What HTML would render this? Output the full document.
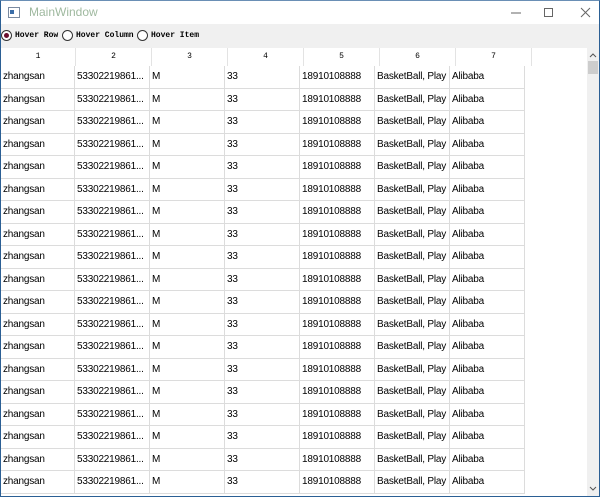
<!DOCTYPE html>
<html><head><style>
body{margin:0;width:600px;height:497px;overflow:hidden;background:#fff;font-family:"Liberation Sans",sans-serif;position:relative}
.win{position:absolute;left:0;top:0;width:598px;height:495px;border:1px solid #2b5f94;border-top:1px solid #6a8fb5;background:#fff}
.title{position:absolute;left:0;top:0;width:598px;height:23px;background:#fff}
.title .t{position:absolute;left:28px;top:4px;font-size:12px;color:#9fb99f}
.tb{position:absolute;left:0;top:23px;width:598px;height:24px;background:#f0f0f0;font-family:"Liberation Mono",monospace;font-size:8px;color:#000;font-weight:bold}
.rb{position:absolute;top:6px;width:11px;height:11px;border:1px solid #333;border-radius:50%;background:#fff;box-sizing:border-box}
.lab{position:absolute;top:7px}
.grid{position:absolute;left:0;top:47px;width:586px;height:448px;overflow:hidden}
.hdr{display:flex;height:18px;font-size:8px;font-family:"Liberation Mono",monospace}
.hdr div{width:74px;border-right:1px solid #e3e3e3;text-align:center;line-height:18px;flex:none}
.rows div.r{display:flex;height:22.5px;box-sizing:border-box}
.r span{width:74px;border-right:1px solid #dcdcdc;border-bottom:1px solid #dcdcdc;font-size:10px;line-height:21px;padding-left:2px;box-sizing:border-box;flex:none;white-space:nowrap;overflow:hidden;color:#000;letter-spacing:-0.2px}
.r span:nth-child(n+2){width:75px}
.hdr div:nth-child(n+2){width:75px}
.sb{position:absolute;left:586px;top:47px;width:12px;height:448px;background:#f0f0f0}
</style></head><body>
<div class="win">
<div class="title">
<svg style="position:absolute;left:7px;top:6px" width="12" height="11"><rect x="0.5" y="0.5" width="11" height="10" fill="#fff" stroke="#7a8aa0"/><rect x="2" y="3" width="4" height="4" fill="#3b6ea8"/></svg>
<span class="t">MainWindow</span>
<svg style="position:absolute;left:505px;top:6px" width="90" height="12"><line x1="5" y1="6" x2="15" y2="6" stroke="#666"/><rect x="38.5" y="1.5" width="8" height="8" fill="none" stroke="#666"/><path d="M75 1L84 10M84 1L75 10" stroke="#666"/></svg>
</div>
<div class="tb">
<div class="rb" style="left:0px"><div style="position:absolute;left:2px;top:2px;width:5px;height:5px;border-radius:50%;background:#6b0f2e"></div></div>
<span class="lab" style="left:14px">Hover Row</span>
<div class="rb" style="left:61px"></div><span class="lab" style="left:75px">Hover Column</span>
<div class="rb" style="left:136px"></div><span class="lab" style="left:150px">Hover Item</span>
</div>
<div class="grid">
<div class="hdr"><div>1</div><div>2</div><div>3</div><div>4</div><div>5</div><div>6</div><div>7</div></div>
<div class="rows">
<div class="r"><span>zhangsan</span><span>53302219861...</span><span>M</span><span>33</span><span>18910108888</span><span>BasketBall, Play</span><span>Alibaba</span></div>
<div class="r"><span>zhangsan</span><span>53302219861...</span><span>M</span><span>33</span><span>18910108888</span><span>BasketBall, Play</span><span>Alibaba</span></div>
<div class="r"><span>zhangsan</span><span>53302219861...</span><span>M</span><span>33</span><span>18910108888</span><span>BasketBall, Play</span><span>Alibaba</span></div>
<div class="r"><span>zhangsan</span><span>53302219861...</span><span>M</span><span>33</span><span>18910108888</span><span>BasketBall, Play</span><span>Alibaba</span></div>
<div class="r"><span>zhangsan</span><span>53302219861...</span><span>M</span><span>33</span><span>18910108888</span><span>BasketBall, Play</span><span>Alibaba</span></div>
<div class="r"><span>zhangsan</span><span>53302219861...</span><span>M</span><span>33</span><span>18910108888</span><span>BasketBall, Play</span><span>Alibaba</span></div>
<div class="r"><span>zhangsan</span><span>53302219861...</span><span>M</span><span>33</span><span>18910108888</span><span>BasketBall, Play</span><span>Alibaba</span></div>
<div class="r"><span>zhangsan</span><span>53302219861...</span><span>M</span><span>33</span><span>18910108888</span><span>BasketBall, Play</span><span>Alibaba</span></div>
<div class="r"><span>zhangsan</span><span>53302219861...</span><span>M</span><span>33</span><span>18910108888</span><span>BasketBall, Play</span><span>Alibaba</span></div>
<div class="r"><span>zhangsan</span><span>53302219861...</span><span>M</span><span>33</span><span>18910108888</span><span>BasketBall, Play</span><span>Alibaba</span></div>
<div class="r"><span>zhangsan</span><span>53302219861...</span><span>M</span><span>33</span><span>18910108888</span><span>BasketBall, Play</span><span>Alibaba</span></div>
<div class="r"><span>zhangsan</span><span>53302219861...</span><span>M</span><span>33</span><span>18910108888</span><span>BasketBall, Play</span><span>Alibaba</span></div>
<div class="r"><span>zhangsan</span><span>53302219861...</span><span>M</span><span>33</span><span>18910108888</span><span>BasketBall, Play</span><span>Alibaba</span></div>
<div class="r"><span>zhangsan</span><span>53302219861...</span><span>M</span><span>33</span><span>18910108888</span><span>BasketBall, Play</span><span>Alibaba</span></div>
<div class="r"><span>zhangsan</span><span>53302219861...</span><span>M</span><span>33</span><span>18910108888</span><span>BasketBall, Play</span><span>Alibaba</span></div>
<div class="r"><span>zhangsan</span><span>53302219861...</span><span>M</span><span>33</span><span>18910108888</span><span>BasketBall, Play</span><span>Alibaba</span></div>
<div class="r"><span>zhangsan</span><span>53302219861...</span><span>M</span><span>33</span><span>18910108888</span><span>BasketBall, Play</span><span>Alibaba</span></div>
<div class="r"><span>zhangsan</span><span>53302219861...</span><span>M</span><span>33</span><span>18910108888</span><span>BasketBall, Play</span><span>Alibaba</span></div>
<div class="r"><span>zhangsan</span><span>53302219861...</span><span>M</span><span>33</span><span>18910108888</span><span>BasketBall, Play</span><span>Alibaba</span></div>
</div>
</div>
<div class="sb">
<svg style="position:absolute;left:2px;top:5px" width="8" height="6"><path d="M1 4L4 1L7 4" fill="none" stroke="#555"/></svg>
<div style="position:absolute;left:1px;top:13px;width:10px;height:13px;background:#cdcdcd"></div>
<svg style="position:absolute;left:2px;top:438px" width="8" height="6"><path d="M1 1L4 4L7 1" fill="none" stroke="#555"/></svg>
</div>
</div>
</body></html>
